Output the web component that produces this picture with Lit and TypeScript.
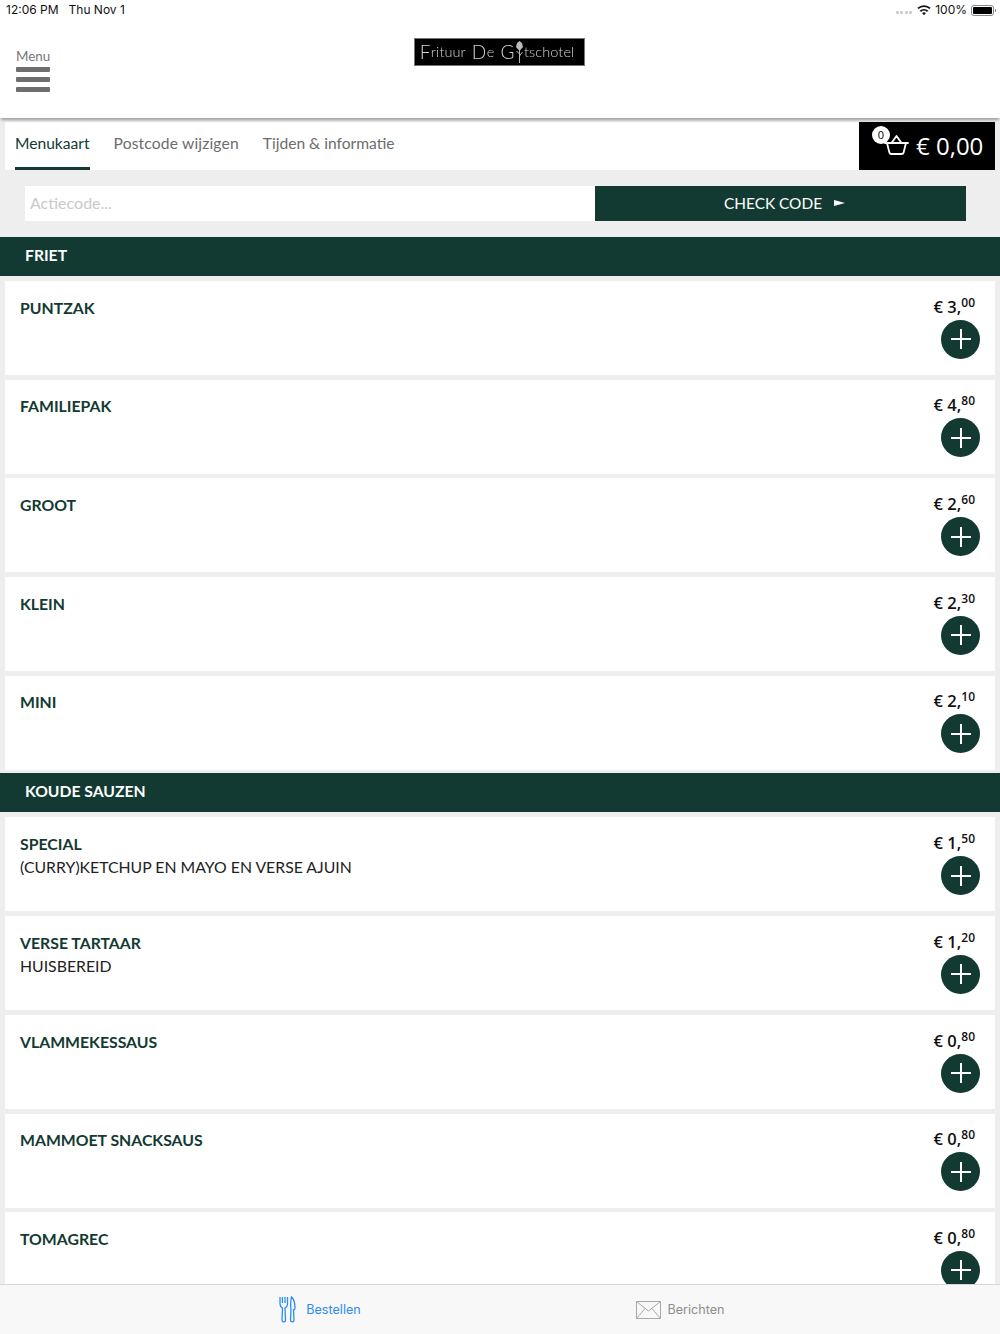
import { LitElement, html, css } from "lit";
import { customElement } from "lit/decorators.js";

type Item = { name: string; sub?: string; euro: string; cents: string };
const friet: Item[] = [
  { name: "PUNTZAK", euro: "3", cents: "00" },
  { name: "FAMILIEPAK", euro: "4", cents: "80" },
  { name: "GROOT", euro: "2", cents: "60" },
  { name: "KLEIN", euro: "2", cents: "30" },
  { name: "MINI", euro: "2", cents: "10" },
];
const sauzen: Item[] = [
  { name: "SPECIAL", sub: "(CURRY)KETCHUP EN MAYO EN VERSE AJUIN", euro: "1", cents: "50" },
  { name: "VERSE TARTAAR", sub: "HUISBEREID", euro: "1", cents: "20" },
  { name: "VLAMMEKESSAUS", euro: "0", cents: "80" },
  { name: "MAMMOET SNACKSAUS", euro: "0", cents: "80" },
  { name: "TOMAGREC", euro: "0", cents: "80" },
];

@customElement("app-root")
export class AppRoot extends LitElement {
  static styles = css`
    :host { display: block; width: 1000px; height: 1334px; position: relative; overflow: hidden; background: #eeeeee; font-family: Lato, "Noto Sans", sans-serif; color: #123a32; }
    .status { height: 20px; background: #fff; display: flex; align-items: center; justify-content: space-between; padding: 0 6px 0 6px; font: 12px/20px Inter, Roboto, sans-serif; color: #111; }
    .status .l { display: flex; gap: 10px; }
    .status .r { display: flex; align-items: center; gap: 4px; }
    .dots { display: flex; gap: 1.5px; margin-right: 1px; margin-top: 4px; }
    .dots i { width: 3px; height: 3px; border-radius: 50%; background: #c4c4c4; }
    .batt { width: 23px; height: 11px; border: 1px solid #888; border-radius: 3px; padding: 1px; box-sizing: border-box; position: relative; }
    .batt b { display: block; height: 100%; background: #000; border-radius: 1px; }
    .batt::after { content: ""; position: absolute; right: -3px; top: 3px; width: 1.5px; height: 3px; background: #888; }
    header { height: 98px; background: #fff; box-shadow: 0 3px 3px -1px rgba(0,0,0,.35); position: relative; z-index: 1; display: grid; grid-template-columns: 1fr auto 1fr; }
    .menu { padding: 28px 0 0 16px; color: #777; font-size: 13.4px; line-height: 16px; }
    .bars { display: flex; flex-direction: column; gap: 5px; width: 34px; margin-top: 3px; }
    .bars i { height: 5px; background: #6e6e6e; border-radius: 1px; }
    .logo { margin-top: 18px; width: 171px; height: 28px; box-sizing: border-box; background: #000; border: 1px solid #777; color: #d4d4d4; font: 300 14.5px/26px Lato, sans-serif; display: flex; align-items: center; justify-content: center; white-space: nowrap; margin-left: -1px; margin-right: 1px; }
    .logo .in { filter: blur(.3px); display: flex; align-items: center; margin-left: -4px; letter-spacing: .1px; }
    .logo b { font-weight: 300; font-size: 19px; letter-spacing: .5px; }
    .logo .sp { width: 6px; }
    .logo svg { width: 11px; height: 24px; margin: 0 -1px 0 -1px; flex: none; }
    .tabs { display: flex; margin: 4px 5px 0; height: 48px; background: #fff; justify-content: space-between; }
    .tablist { display: flex; gap: 24px; padding-left: 10px; font-size: 15.6px; color: #6c6c6c; }
    .tab { height: 48px; line-height: 43px; box-sizing: border-box; }
    .tab.on { color: #123a32; border-bottom: 3px solid #123a32; }
    .tab.wide { letter-spacing: .17px; }
    .cart { width: 136px; background: #000; color: #fff; position: relative; display: flex; align-items: center; padding: 0 0 1px 57px; box-sizing: border-box; font: 24px/44px "Open Sans", sans-serif; }
    .cart svg { position: absolute; left: 24px; top: 10px; width: 27px; height: 24px; }
    .badge { position: absolute; left: 13px; top: 4px; width: 18px; height: 18px; border-radius: 50%; background: #fff; color: #000; font: 11px/18px "Open Sans", sans-serif; text-align: center; }
    .code { display: flex; margin: 16px 34px 16px 25px; height: 35px; }
    .code .inp { width: 570px; background: #fff; color: #c9c9c9; font-size: 16px; line-height: 33px; padding-left: 5px; box-sizing: border-box; }
    .code .btn { flex: 1; background: #123a32; color: #fff; font-size: 15.4px; line-height: 32px; display: flex; align-items: center; justify-content: center; gap: 12px; padding: 0 0 2px 8px; box-sizing: border-box; }
    .arrow { width: 0; height: 0; border-left: 11px solid #fff; border-top: 3.5px solid transparent; border-bottom: 3.5px solid transparent; }
    .sec { height: 39px; background: #123a32; color: #fff; font-weight: 700; font-size: 15.7px; line-height: 37px; padding-left: 25px; }
    .rows { display: flex; flex-direction: column; gap: 4.7px; padding: 5px 5px 3.7px; }
    .row { height: 94px; background: #fff; display: flex; justify-content: space-between; padding: 14.7px 15px 0; box-sizing: border-box; }
    .name { font-weight: 700; font-size: 15.8px; line-height: 23px; }
    .sub { color: #222; font-size: 15.8px; line-height: 23px; }
    .right { display: flex; flex-direction: column; align-items: flex-end; }
    .price { font: 600 16.5px/22px "Open Sans", sans-serif; color: #111; white-space: nowrap; margin-right: 5px; }
    .price sup { font-size: 12px; font-weight: 600; line-height: 0; vertical-align: 6px; }
    .plus { width: 39px; height: 39px; margin-top: 2px; border-radius: 50%; background: #123a32; display: flex; align-items: center; justify-content: center; }
    .plus svg { width: 20px; height: 20px; }
    nav { position: absolute; left: 0; right: 0; bottom: 0; height: 50px; background: #f8f8f8; border-top: 1px solid #d6d6d6; box-sizing: border-box; display: grid; grid-template-columns: 1fr 1fr; padding: 0 140px; z-index: 2; font: 12.6px Inter, Roboto, sans-serif; color: #8e8e8e; }
    nav .it { display: flex; align-items: center; justify-content: center; gap: 7px; }
    nav .it.on { color: #2b8cf0; gap: 10px; }
  `;

  private row(i: Item) {
    return html`<div class="row">
      <div><div class="name">${i.name}</div>${i.sub ? html`<div class="sub">${i.sub}</div>` : ""}</div>
      <div class="right">
        <div class="price">€ ${i.euro},<sup>${i.cents}</sup></div>
        <div class="plus"><svg viewBox="0 0 20 20"><path d="M10 0v20M0 10h20" stroke="#fff" stroke-width="2" fill="none"/></svg></div>
      </div>
    </div>`;
  }

  render() {
    return html`
      <div class="status">
        <div class="l"><span>12:06 PM</span><span>Thu Nov 1</span></div>
        <div class="r">
          <span class="dots"><i></i><i></i><i></i><i></i></span>
          <svg width="14" height="11" viewBox="0 0 16 12"><path d="M8 11.5 10.2 8.9a3.2 3.2 0 0 0-4.4 0ZM4.6 7.6a5 5 0 0 1 6.8 0l1.4-1.6a7.2 7.2 0 0 0-9.6 0ZM1.8 4.4a9.2 9.2 0 0 1 12.4 0L15.6 2.8a11.3 11.3 0 0 0-15.2 0Z" fill="#111"/></svg>
          <span>100%</span>
          <span class="batt"><b></b></span>
        </div>
      </div>
      <header>
        <div class="menu">Menu<div class="bars"><i></i><i></i><i></i></div></div>
        <div class="logo"><span class="in"><b>F</b>rituur<span class="sp"></span><b>D</b>e<span class="sp"></span><b>G</b><svg viewBox="0 0 11 24"><path d="M5.5 23V10M5.5 14 2.5 11M5.5 16 8.5 12" stroke="#bbb" fill="none"/><path d="M5.5 1 8 3 9 7 5.5 11 2 7 3 3Z" fill="#bbb"/></svg>tschotel</span></div>
        <div></div>
      </header>
      <div class="tabs">
        <div class="tablist">
          <div class="tab on">Menukaart</div>
          <div class="tab wide">Postcode wijzigen</div>
          <div class="tab">Tijden &amp; informatie</div>
        </div>
        <div class="cart">
          <svg viewBox="0 0 27 24"><path d="M2 11h23M4 11l2.4 9.500q.4 1.500 2 1.500h10.200q1.600 0 2-1.500L23 11M8.500 11l5-7 5 7" stroke="#fff" stroke-width="1.800" fill="none" stroke-linejoin="round" stroke-linecap="round"/></svg>
          <span class="badge">0</span>
          € 0,00
        </div>
      </div>
      <div class="code">
        <div class="inp">Actiecode...</div>
        <div class="btn">CHECK CODE <span class="arrow"></span></div>
      </div>
      <div class="sec">FRIET</div>
      <div class="rows">${friet.map((i) => this.row(i))}</div>
      <div class="sec">KOUDE SAUZEN</div>
      <div class="rows">${sauzen.map((i) => this.row(i))}</div>
      <nav>
        <div class="it on">
          <svg width="17" height="27" viewBox="0 0 17 27" fill="none" stroke="#2b8cf0" stroke-width="1.3"><path d="M1 1v7c0 2.500 1.500 3.500 2.500 4L3 24c0 2.500 3.500 2.500 3.500 0L6 12c1-.5 2.500-1.500 2.500-4V1M3.400 1v6M6 1v6M12.500 1C15 3 16 8 16 12c0 1.500-1 2-1.500 2l.5 10c0 2.500-3.500 2.500-3.500 0l.5-10C11.500 10 11.500 5 12.500 1Z"/></svg>
          <span>Bestellen</span>
        </div>
        <div class="it">
          <svg width="25" height="18" viewBox="0 0 25 18" fill="none" stroke="#a8a8a8" stroke-width="1"><path d="M.5.5h24v17H.5ZM.5.5 12.500 10 24.500.5M.5 17.500 9 7.500M24.500 17.500 16 7.500"/></svg>
          <span>Berichten</span>
        </div>
      </nav>
    `;
  }
}
